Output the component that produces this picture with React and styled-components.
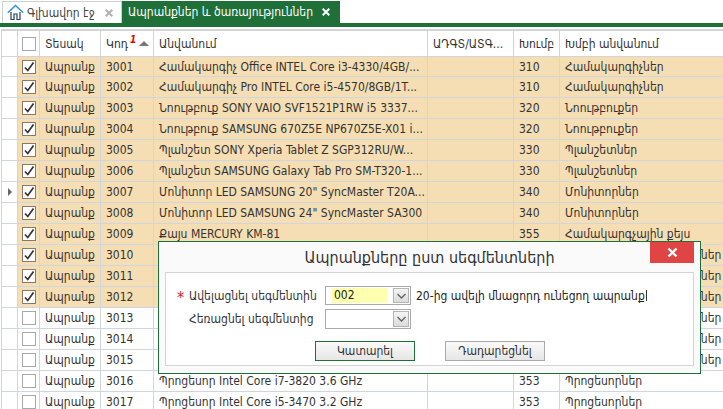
import React from "react";
import styled, { createGlobalStyle } from "styled-components";

const GlobalStyle = createGlobalStyle`
  html, body { margin: 0; padding: 0; background: #fff; }
  body { font-family: "DejaVu Sans Condensed", "DejaVu Sans", sans-serif; font-size: 12px; color: #333; }
`;

const COLUMNS = "16px 22px 61px 53px 274px 86px 46px 1fr";

const Page = styled.div`
  position: relative;
  width: 723px;
  height: 409px;
  overflow: hidden;
`;

const TabBar = styled.div`
  display: flex;
  align-items: flex-end;
  height: 23px;
  padding-left: 2px;
`;

const Tab = styled.div`
  display: flex;
  align-items: center;
  box-sizing: border-box;
  height: 22px;
  width: ${(p) => (p.$active ? "218px" : "120px")};
  padding-left: ${(p) => (p.$active ? "6px" : "4px")};
  background: ${(p) => (p.$active ? "#1e7038" : "#fff")};
  color: ${(p) => (p.$active ? "#fff" : "#444")};
  border: ${(p) => (p.$active ? "none" : "1px solid #d0d0d0")};
  border-bottom: none;
  font-size: 12px;
`;

const TabLabel = styled.span`
  margin-left: ${(p) => (p.$icon ? "3px" : "0")};
  flex: 1;
  white-space: nowrap;
`;

const TabClose = styled.svg`
  width: 8px;
  height: 8px;
  margin-right: ${(p) => (p.$active ? "10px" : "8px")};
  stroke: ${(p) => (p.$active ? "#fff" : "#b0b0b0")};
  stroke-width: 2;
  fill: none;
`;

const GreenStrip = styled.div`
  height: 4px;
  background: #1e7038;
`;

const Grid = styled.div`
  margin-top: 2px;
  margin-left: 1px;
  border-top: 2px solid #d4d4d4;
`;

const Row = styled.div`
  display: grid;
  grid-template-columns: ${COLUMNS};
  height: ${(p) => p.$height}px;
  box-sizing: border-box;
  border-bottom: 1px solid ${(p) => (p.$head ? "#d4d4d4" : "#cfd6e0")};
`;

const Cell = styled.div`
  display: flex;
  align-items: center;
  box-sizing: border-box;
  padding-left: ${(p) => (p.$tight ? "0" : "5px")};
  justify-content: ${(p) => (p.$center ? "center" : "flex-start")};
  border-left: 1px solid ${(p) => (p.$head ? "#d4d4d4" : "#cfd6e0")};
  background: ${(p) => (p.$tan ? "#f5deb3" : "#fff")};
  white-space: nowrap;
  overflow: hidden;
  font-size: 12px;
  color: #333;
`;

const Check = styled.span`
  display: block;
  box-sizing: border-box;
  width: 14px;
  height: 14px;
  border: 1px solid ${(p) => (p.$on ? "#8a7a66" : "#a8a8a8")};
  background: #fff;
`;

const SortArrow = styled.span`
  margin-left: 3px;
  width: 0;
  height: 0;
  border-left: 5px solid transparent;
  border-right: 5px solid transparent;
  border-bottom: 5px solid #777;
`;

const SortOrder = styled.span`
  color: #e00;
  font-weight: bold;
  font-style: italic;
  font-size: 10px;
  align-self: flex-start;
  margin: 4px 0 0 2px;
  line-height: 10px;
`;

const Pointer = styled.span`
  width: 0;
  height: 0;
  border-top: 4px solid transparent;
  border-bottom: 4px solid transparent;
  border-left: 4px solid #666;
`;

const Modal = styled.div`
  position: absolute;
  left: 158px;
  top: 241px;
  width: 543px;
  height: 133px;
  box-sizing: border-box;
  border: 1px solid #1e7038;
  background: #fafafa;
  padding: 0 6px 7px 6px;
  display: flex;
  flex-direction: column;
`;

const ModalTitle = styled.div`
  height: 30px;
  display: flex;
  align-items: center;
  justify-content: center;
  font-size: 16px;
  color: #333;
`;

const CloseButton = styled.div`
  position: absolute;
  right: 6px;
  top: 0;
  width: 44px;
  height: 21px;
  background: #e04444;
  display: flex;
  align-items: center;
  justify-content: center;
`;

const ModalBody = styled.div`
  flex: 1;
  border: 1px solid #d4d4d4;
  background: #fff;
  box-sizing: border-box;
  padding-top: 13px;
  display: flex;
  flex-direction: column;
`;

const FormRow = styled.div`
  display: flex;
  align-items: center;
  height: ${(p) => p.$height}px;
  margin-bottom: 4px;
`;

const FieldLabel = styled.div`
  width: 159px;
  box-sizing: border-box;
  padding-left: 23px;
  white-space: nowrap;
  font-size: 12px;
  color: #333;
  position: relative;
`;

const Star = styled.span`
  position: absolute;
  left: 11px;
  top: -1px;
  font-size: 16px;
  line-height: 20px;
  color: #e02040;
`;

const Select = styled.div`
  width: 86px;
  height: 100%;
  box-sizing: border-box;
  border: 1px solid #aaa;
  display: flex;
  justify-content: flex-end;
  background: #fff;
`;

const SelectValue = styled.div`
  flex: 1;
  margin: 1px 5px 1px 6px;
  background: ${(p) => (p.$filled ? "#ffffb0" : "transparent")};
  padding-left: 2px;
  font-size: 12px;
  line-height: 15px;
  color: #222;
`;

const SelectButton = styled.div`
  width: 16px;
  margin: 1px;
  box-sizing: border-box;
  border: 1px solid #b5b5b5;
  background: linear-gradient(#f4f4f4, #dcdcdc);
  display: flex;
  align-items: center;
  justify-content: center;
`;

const Hint = styled.div`
  display: flex;
  align-items: center;
  margin-left: 5px;
  white-space: nowrap;
  font-size: 12px;
  color: #222;
`;

const Caret = styled.span`
  width: 1px;
  height: 11px;
  margin-left: 1px;
  background: #333;
`;

const Buttons = styled.div`
  display: flex;
  gap: 30px;
  margin-top: 8px;
  padding-left: 149px;
`;

const Button = styled.div`
  width: 100px;
  height: 20px;
  box-sizing: border-box;
  border: 1px solid ${(p) => (p.$primary ? "#1e7038" : "#aaa")};
  background: linear-gradient(#fafafa, #e6e6e6);
  display: flex;
  align-items: center;
  justify-content: center;
  font-size: 12px;
  color: #333;
`;

const COMP = "Համակարգիչներ";
const NOTE = "Նոութբուքեր";
const TAB = "Պլանշետներ";
const MON = "Մոնիտորներ";
const CPU = "Պրոցեսորներ";
const BOARD = "Համակարգչային սալիկներ";

const items = [
  [3001, "Համակարգիչ Office INTEL Core i3-4330/4GB/...", 310, COMP],
  [3002, "Համակարգիչ Pro INTEL Core i5-4570/8GB/1T...", 310, COMP],
  [3003, "Նոութբուք SONY VAIO SVF1521P1RW i5 3337...", 320, NOTE],
  [3004, "Նոութբուք SAMSUNG 670Z5E NP670Z5E-X01 i...", 320, NOTE],
  [3005, "Պլանշետ SONY Xperia Tablet Z SGP312RU/W...", 330, TAB],
  [3006, "Պլանշետ SAMSUNG Galaxy Tab Pro SM-T320-1...", 330, TAB],
  [3007, 'Մոնիտոր LED SAMSUNG 20" SyncMaster T20A...', 340, MON],
  [3008, 'Մոնիտոր LED SAMSUNG 24" SyncMaster SA300', 340, MON],
  [3009, "Քայս MERCURY KM-81", 355, "Համակարգչային քեյս"],
  [3010, "Մայր սալիկ ASUS H81M-K", 351, BOARD],
  [3011, "Մայր սալիկ ASUS B85M-G", 351, BOARD],
  [3012, "Մայր սալիկ GIGABYTE GA-H81M", 351, BOARD],
  [3013, "Մայր սալիկ GIGABYTE GA-B85M", 351, BOARD],
  [3014, "Մայր սալիկ MSI H81M-P33", 351, BOARD],
  [3015, "Մայր սալիկ MSI B85M-E45", 351, BOARD],
  [3016, "Պրոցեսոր Intel Core i7-3820 3.6 GHz", 353, CPU],
  [3017, "Պրոցեսոր Intel Core i5-3470 3.2 GHz", 353, CPU],
];

const Tick = () => (
  <svg width="12" height="12" viewBox="0 0 12 12">
    <path d="M2 6.5 L4.8 9.5 L10.5 1.5" fill="none" stroke="#333" strokeWidth="1.7" />
  </svg>
);

const Chevron = () => (
  <svg width="9" height="6" viewBox="0 0 9 6">
    <path d="M0.5 1 L4.5 5 L8.5 1" fill="none" stroke="#666" strokeWidth="1.4" />
  </svg>
);

const CloseMark = ({ $active }) => (
  <TabClose $active={$active} viewBox="0 0 8 8">
    <path d="M0.7 0.7 L7.3 7.3 M7.3 0.7 L0.7 7.3" />
  </TabClose>
);

const Home = () => (
  <svg width="17" height="17" viewBox="0 0 17 17">
    <path d="M4 8 V15.5 H7 V10 H10 V15.5 H13 V8" fill="none" stroke="#24425e" strokeWidth="1.2" />
    <path d="M0.8 8.8 L8.5 1.4 L16.2 8.8" fill="none" stroke="#2f8fd8" strokeWidth="1.4" />
  </svg>
);

export default function App() {
  return (
    <Page>
      <GlobalStyle />
      <TabBar>
        <Tab>
          <Home />
          <TabLabel $icon>Գլխավոր էջ</TabLabel>
          <CloseMark />
        </Tab>
        <Tab $active>
          <TabLabel>Ապրանքներ և ծառայություններ</TabLabel>
          <CloseMark $active />
        </Tab>
      </TabBar>
      <GreenStrip />
      <Grid>
        <Row $head $height={26}>
          <Cell $head $tight />
          <Cell $head $tight $center>
            <Check />
          </Cell>
          <Cell $head>Տեսակ</Cell>
          <Cell $head>
            Կոդ<SortOrder>1</SortOrder>
            <SortArrow />
          </Cell>
          <Cell $head>Անվանում</Cell>
          <Cell $head>ԱԴԳՏ/ԱՏԳ...</Cell>
          <Cell $head>Խումբ</Cell>
          <Cell $head>Խմբի անվանում</Cell>
        </Row>
        {items.map(([code, name, group, groupName], i) => {
          const on = i < 12;
          return (
            <Row key={code} $height={i === 0 ? 20 : 21}>
              <Cell $tight $center>
                {code === 3007 && <Pointer />}
              </Cell>
              <Cell $tight $center $tan={on}>
                <Check $on={on}>{on && <Tick />}</Check>
              </Cell>
              <Cell $tan={on}>Ապրանք</Cell>
              <Cell $tan={on}>{code}</Cell>
              <Cell $tan={on}>{name}</Cell>
              <Cell $tan={on} />
              <Cell $tan={on}>{group}</Cell>
              <Cell $tan={on}>{groupName}</Cell>
            </Row>
          );
        })}
      </Grid>
      <Modal>
        <ModalTitle>Ապրանքները ըստ սեգմենտների</ModalTitle>
        <CloseButton>
          <svg width="11" height="11" viewBox="0 0 11 11">
            <path d="M1.5 1.5 L9.5 9.5 M9.5 1.5 L1.5 9.5" stroke="#fff" strokeWidth="2.4" />
          </svg>
        </CloseButton>
        <ModalBody>
          <FormRow $height={19}>
            <FieldLabel>
              <Star>*</Star>Ավելացնել սեգմենտին
            </FieldLabel>
            <Select>
              <SelectValue $filled>002</SelectValue>
              <SelectButton>
                <Chevron />
              </SelectButton>
            </Select>
            <Hint>
              20-ից ավելի մնացորդ ունեցող ապրանք
              <Caret />
            </Hint>
          </FormRow>
          <FormRow $height={20}>
            <FieldLabel>Հեռացնել սեգմենտից</FieldLabel>
            <Select>
              <SelectValue />
              <SelectButton>
                <Chevron />
              </SelectButton>
            </Select>
          </FormRow>
          <Buttons>
            <Button $primary>Կատարել</Button>
            <Button>Դադարեցնել</Button>
          </Buttons>
        </ModalBody>
      </Modal>
    </Page>
  );
}
